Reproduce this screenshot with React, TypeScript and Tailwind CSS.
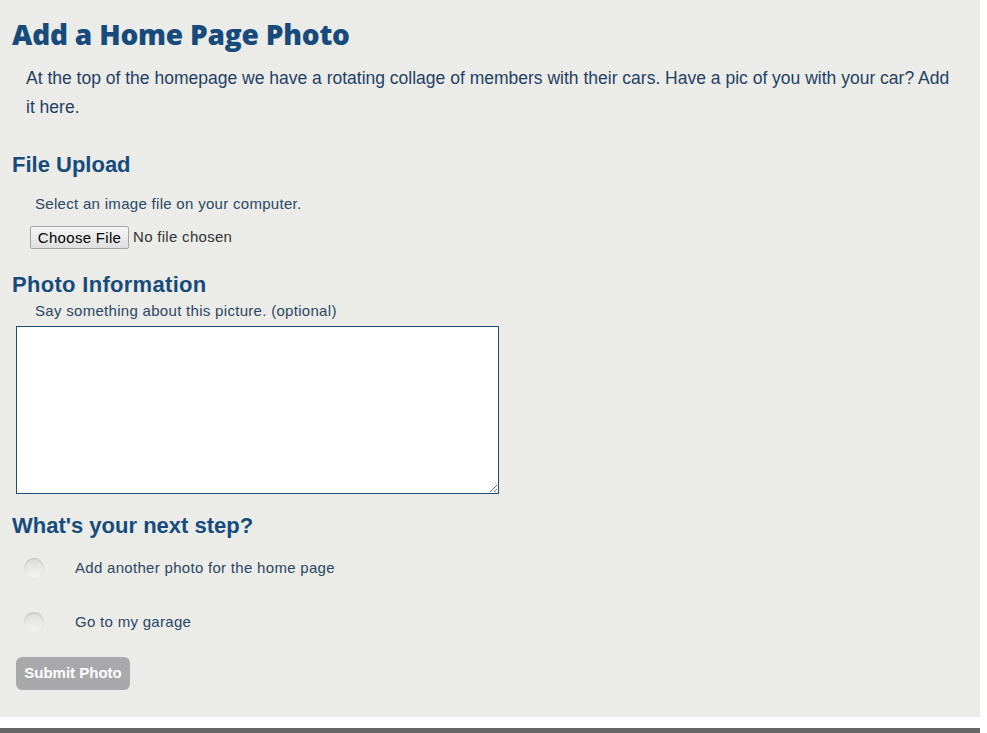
import { useState } from "react";

const App = () => {
  const [step, setStep] = useState<string | null>(null);

  return (
    <div className="min-h-[733px] w-[987px] bg-white font-['Liberation_Sans',Arial,sans-serif]">
      <div className="w-[980px] bg-[#ebebe7] pb-[27px] pl-[12px] pt-[15px] text-[#2a4766]">
        <h1 className="font-['Open_Sans',sans-serif] text-[28px] font-extrabold leading-[38px] tracking-[-0.2px] text-[#174b7c]">
          Add a Home Page Photo
        </h1>
        <p className="mt-[11px] pl-[14px] pr-[22px] text-[17.5px] leading-[29px] text-[#1f4166]">
          At the top of the homepage we have a rotating collage of members with their cars. Have a pic of you with your car? Add it here.
        </p>

        <h2 className="mt-[28px] text-[22px] font-bold leading-[30px] text-[#174b7c]">File Upload</h2>
        <p className="mt-[15px] pl-[23px] text-[15px] leading-[18px] tracking-[0.3px]">Select an image file on your computer.</p>
        <div className="mt-[13px] flex items-center pl-[18px] text-[15px] tracking-[0.3px]">
          <button className="h-[23px] w-[99px] rounded-[2px] border border-[#a6a6a6] bg-gradient-to-b from-[#f6f6f6] to-[#dedede] text-[15px] text-black">
            Choose File
          </button>
          <span className="ml-[4px] text-[#333]">No file chosen</span>
        </div>

        <h2 className="mt-[21px] text-[22px] font-bold leading-[30px] tracking-[0.3px] text-[#174b7c]">Photo Information</h2>
        <p className="mt-[2px] pl-[23px] text-[15px] leading-[18px] tracking-[0.3px]">Say something about this picture. (optional)</p>
        <textarea className="ml-[4px] mt-[6px] block h-[168px] w-[483px] border border-[#1f4b75] bg-white" />

        <h2 className="mt-[17px] text-[22px] font-bold leading-[30px] text-[#174b7c]">What's your next step?</h2>
        <div className="mt-[16px] flex flex-col gap-[31px] text-[15px] tracking-[0.3px]">
          {["Add another photo for the home page", "Go to my garage"].map((label) => (
            <label key={label} className="flex cursor-pointer items-center" onClick={() => setStep(label)}>
              <span className="ml-[12px] flex h-[20px] w-[20px] items-center justify-center rounded-full bg-gradient-to-b from-[#dcdcd8] to-[#f4f4f2] shadow-[inset_0_1px_2px_rgba(0,0,0,0.15)]">
                {step === label && <span className="h-[8px] w-[8px] rounded-full bg-[#174b7c]" />}
              </span>
              <span className="ml-[31px]">{label}</span>
            </label>
          ))}
        </div>

        <button className="ml-[4px] mt-[24px] h-[33px] w-[114px] rounded-[6px] bg-[#a9a9ac] text-[15px] font-bold text-white">
          Submit Photo
        </button>
      </div>
      <div className="mt-[11px] h-[5px] w-[980px] bg-[#666666]" />
    </div>
  );
};

export default App;
